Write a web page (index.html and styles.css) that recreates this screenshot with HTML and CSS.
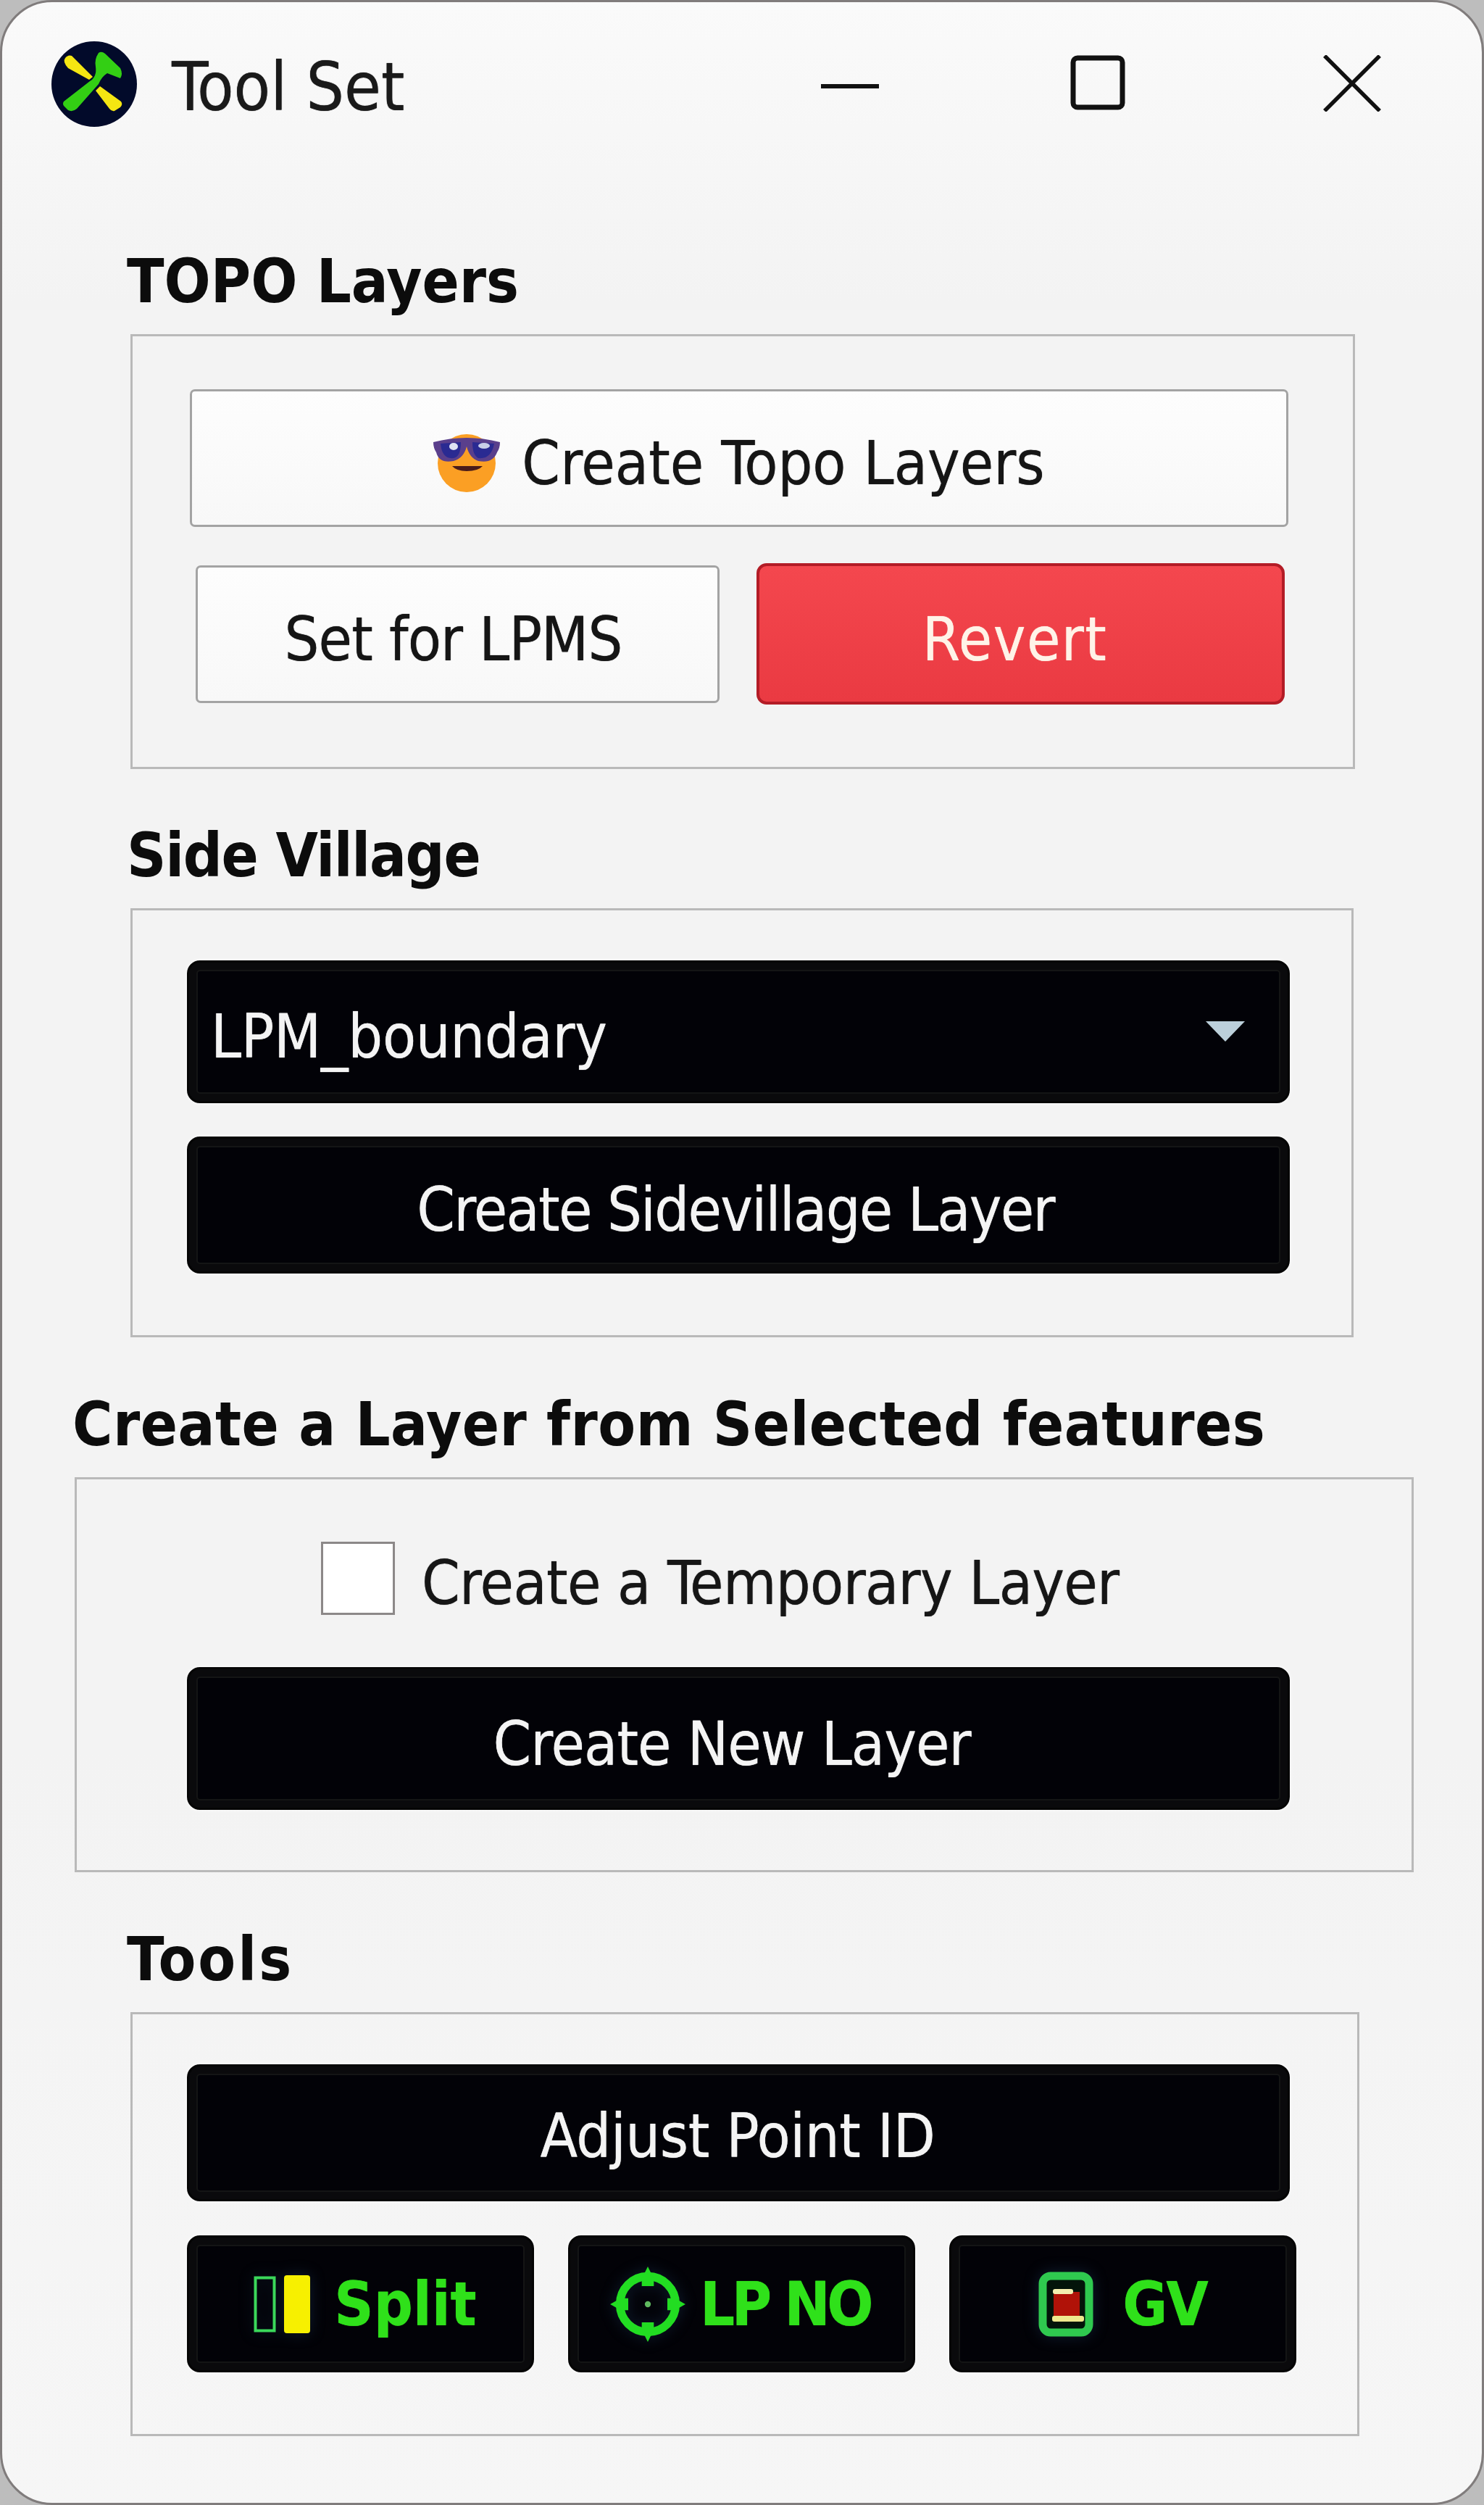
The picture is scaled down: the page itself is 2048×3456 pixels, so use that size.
FILE: index.html
```html
<!DOCTYPE html>
<html lang="en">
<head>
<meta charset="utf-8">
<title>Tool Set</title>
<link rel="stylesheet" href="styles.css">
</head>
<body>
<div class="window">
  <header class="titlebar">
    <svg class="logo" viewBox="0 0 120 120">
      <circle cx="60" cy="60" r="59" fill="#020a2a"/>
      <path d="M20 24 Q24 19 29 21 L58 50 L53 54 L24 38 Q16 29 20 24Z" fill="#f5e612"/>
      <path d="M62 69 L68 63 L97 84 Q100 88 96 92 L88 97 Q84 98 81 94Z" fill="#f5e612"/>
      <path d="M18 84 L54 56 Q64 50 62 36 Q60 26 66 17 Q70 14 75 18 L96 38 Q100 46 96 52 L78 45 Q70 50 66 60 L36 94 Q30 99 24 96 L18 90 Q16 87 18 84Z" fill="#33cf14"/>
    </svg>
    <span class="app-title">Tool Set</span>
    <span class="win-btns">
      <svg class="wb-min" viewBox="0 0 80 8"><path d="M0 4H80" stroke="#111" stroke-width="6"/></svg>
      <svg class="wb-max" viewBox="0 0 76 76"><rect x="4" y="4" width="68" height="68" rx="6" fill="none" stroke="#111" stroke-width="7"/></svg>
      <svg class="wb-close" viewBox="0 0 80 78"><path d="M2 1L78 77M78 1L2 77" stroke="#111" stroke-width="5.5" fill="none"/></svg>
    </span>
  </header>

  <section class="section">
    <h2 class="heading">TOPO Layers</h2>
    <div class="group group-topo">
      <button class="btn btn-light btn-topo">
        <svg class="emoji" viewBox="0 0 92 82">
          <circle cx="46" cy="41" r="40" fill="#fb9f24"/>
          <path d="M0 12 Q46 0 92 12 Q92 20 88 26 Q82 42 62 38 Q50 34 46 18 Q42 34 28 38 Q8 42 4 26 Q0 20 0 12Z" fill="#5a3f8c"/>
          <path d="M10 14 L38 12 Q38 32 28 34 Q12 36 10 14Z M54 12 L84 14 Q80 36 62 34 Q54 30 54 12Z" fill="#2a2a92"/>
          <ellipse cx="28" cy="18" rx="6" ry="5" fill="#dfe2f2"/>
          <ellipse cx="70" cy="17" rx="8" ry="4" fill="#c9cee8"/>
          <path d="M26 45 H68 Q62 52 46 52 Q32 52 26 45Z" fill="#4a1c1a"/>
        </svg>
        <span>Create Topo Layers</span>
      </button>
      <div class="row row-lpms">
        <button class="btn btn-light btn-lpms">Set for LPMS</button>
        <button class="btn btn-red">Revert</button>
      </div>
    </div>
  </section>

  <section class="section section-side">
    <h2 class="heading heading-side">Side Village</h2>
    <div class="group group-side">
      <div class="btn btn-dark combo">
        <span>LPM_boundary</span>
        <svg class="caret" viewBox="0 0 56 30"><path d="M1 1H55L28 29Z" fill="#bcd0da"/></svg>
      </div>
      <button class="btn btn-dark btn-std btn-sidevillage">Create Sidevillage Layer</button>
    </div>
  </section>

  <section class="section">
    <h2 class="heading heading-wide">Create a Layer from Selected features</h2>
    <div class="group group-temp">
      <label class="check-row">
        <span class="checkbox"></span>
        <span class="check-text">Create a Temporary Layer</span>
      </label>
      <button class="btn btn-dark btn-new">Create New Layer</button>
    </div>
  </section>

  <section class="section">
    <h2 class="heading heading-tools">Tools</h2>
    <div class="group group-tools">
      <button class="btn btn-dark btn-std btn-adjust">Adjust Point ID</button>
      <div class="row row-tools">
        <button class="btn btn-dark btn-tool btn-split">
          <svg class="ic-split" viewBox="0 0 78 82">
            <rect x="2.5" y="4.5" width="26" height="73" fill="none" stroke="#3bd85a" stroke-width="4"/>
            <rect x="42" y="1" width="36" height="80" rx="4" fill="#f7f000"/>
          </svg>
          <span>Split</span>
        </button>
        <button class="btn btn-dark btn-tool btn-lpno">
          <svg class="ic-target" viewBox="0 0 100 104">
            <circle cx="50" cy="52" r="37" fill="none" stroke="#22dd22" stroke-width="11"/>
            <path d="M50 2L58 18V28H42V18Z M50 102L58 86V76H42V86Z M0 52L14 44H24V60H14Z M100 52L86 44H76V60H86Z" fill="#22dd22"/>
            <circle cx="50" cy="52" r="4" fill="#5fb85f"/>
          </svg>
          <span>LP NO</span>
        </button>
        <button class="btn btn-dark btn-tool btn-gv">
          <svg class="ic-gv" viewBox="0 0 76 90">
            <rect x="6" y="6" width="64" height="78" rx="11" fill="#03140a" stroke="#2fc94f" stroke-width="11"/>
            <rect x="21" y="28" width="36" height="36" fill="#b01208"/>
            <rect x="20" y="24" width="28" height="7" rx="3" fill="#f3eeb0"/>
            <rect x="19" y="61" width="44" height="8" rx="3" fill="#efe88e"/>
          </svg>
          <span>GV</span>
        </button>
      </div>
    </div>
  </section>
</div>
</body>
</html>
```
FILE: styles.css
```css
* { box-sizing: border-box; }
html, body { margin: 0; padding: 0; }
body {
  width: 2048px;
  height: 3456px;
  background: #bdbdbd;
  font-family: "DejaVu Sans", sans-serif;
  font-stretch: condensed;
  color: #111;
}
.window {
  height: 3456px;
  padding-bottom: 3px;
  background: linear-gradient(#fafafa, #f3f3f3 12%, #f3f3f3 70%, #f6f6f6);
  border: 3px solid #807c7c;
  border-radius: 72px;
  overflow: hidden;
}
.titlebar {
  display: flex;
  align-items: flex-start;
  height: 265px;
  padding: 53px 0 0 67px;
}
.logo { width: 120px; height: 120px; flex: none; }
.app-title {
  margin: 15px 0 0 47px;
  font-size: 92px;
  line-height: 100px;
  color: #1a1a1a;
  text-shadow: 0 0 1px #1a1a1a;
}
.win-btns { display: contents; }
.wb-min { width: 80px; height: 8px; margin: 59px 0 0 575px; flex: none; }
.wb-max { width: 76px; height: 76px; margin: 20px 0 0 264px; flex: none; }
.wb-close { width: 80px; height: 78px; margin: 20px 0 0 273px; flex: none; }

.section { margin-top: 70px; }
.section-side { margin-top: 69px; }
.heading {
  margin: 0 0 23px 172px;
  font-size: 84px;
  line-height: 100px;
  font-weight: 700;
  color: #0c0c0c;
  white-space: nowrap;
}
.heading-wide { margin-left: 97px; letter-spacing: .5px; }
.heading-side { letter-spacing: -1.3px; }
.heading-tools { letter-spacing: 3px; }

.group {
  display: flex;
  flex-direction: column;
  align-items: flex-start;
  border: 3px solid #b9b9b9;
}
.group-topo { margin-left: 177px; width: 1690px; padding: 73px 0 86px 79px; }
.group-side { margin-left: 177px; width: 1688px; padding: 69px 0 85px 75px; }
.group-temp { margin-left: 100px; width: 1848px; padding: 86px 0 83px 152px; }
.group-tools { margin-left: 177px; width: 1696px; padding: 69px 0 85px 75px; }

.btn {
  display: flex;
  align-items: center;
  justify-content: center;
  margin: 0;
  padding: 14px 8px 0 0;
  font: inherit;
  font-stretch: condensed;
  font-size: 84px;
  white-space: nowrap;
  text-shadow: 0 0 1px currentColor;
}
.btn-light {
  background: linear-gradient(#fdfdfd, #f8f8f8);
  border: 3px solid #a3a3a3;
  border-radius: 7px;
  color: #151515;
}
.btn-topo { width: 1516px; height: 190px; gap: 30px; padding: 14px 0 0; }
.emoji { width: 92px; height: 82px; flex: none; }
.row { display: flex; align-items: center; }
.row-lpms { margin: 50px 0 0 8px; gap: 51px; }
.btn-lpms { width: 723px; height: 190px; padding-right: 12px; letter-spacing: -.9px; }
.btn-red {
  width: 729px;
  height: 195px;
  padding-right: 16px;
  letter-spacing: 1.4px;
  background: linear-gradient(#f4474e, #ea3a42);
  border: 4px solid #b31c26;
  border-radius: 14px;
  color: #fff3e8;
}
.btn-dark {
  background: #020207;
  border: 3px solid #050505;
  border-radius: 18px;
  color: #f4f4f4;
  box-shadow: inset 0 0 0 10px #0a0a0c, inset 0 0 0 12px #141515, 0 0 6px rgba(255,255,255,.8);
}
.btn-std { width: 1522px; height: 189px; }
.btn-sidevillage { margin-top: 46px; padding-top: 12px; letter-spacing: -1.75px; }
.btn-adjust { padding: 8px 2px 0 0; letter-spacing: -.45px; }
.combo {
  justify-content: space-between;
  width: 1522px;
  height: 197px;
  padding: 12px 58px 0 30px;
  letter-spacing: -.35px;
}
.caret { width: 56px; height: 30px; flex: none; margin-top: -14px; }
.check-row {
  display: flex;
  align-items: center;
  gap: 37px;
  height: 101px;
  margin-left: 185px;
  font-size: 84px;
  color: #161616;
}
.check-text { line-height: 84px; padding-top: 12px; letter-spacing: -.7px; text-shadow: 0 0 1px #161616; }
.checkbox {
  width: 102px;
  height: 101px;
  background: #fff;
  border: 3px solid #8c8888;
  flex: none;
}
.btn-new { width: 1522px; height: 197px; margin-top: 72px; padding-right: 18px; letter-spacing: -.95px; }
.row-tools { margin-top: 47px; gap: 47px; }
.btn-tool {
  width: 479px;
  height: 189px;
  gap: 20px;
  padding: 0;
  color: #2fe11a;
  font-weight: 700;
}
.btn-split { gap: 33px; padding-left: 13px; }
.btn-lpno { letter-spacing: -4.5px; gap: 20px; padding-right: 4px; }
.btn-gv { letter-spacing: -2px; }
.ic-split, .ic-target, .ic-gv { filter: drop-shadow(0 0 10px rgba(40, 80, 120, .35)); }
.ic-split { width: 78px; height: 82px; flex: none; }
.ic-target { width: 104px; height: 108px; flex: none; }
.ic-gv { width: 76px; height: 90px; flex: none; margin-right: 20px; }
```
